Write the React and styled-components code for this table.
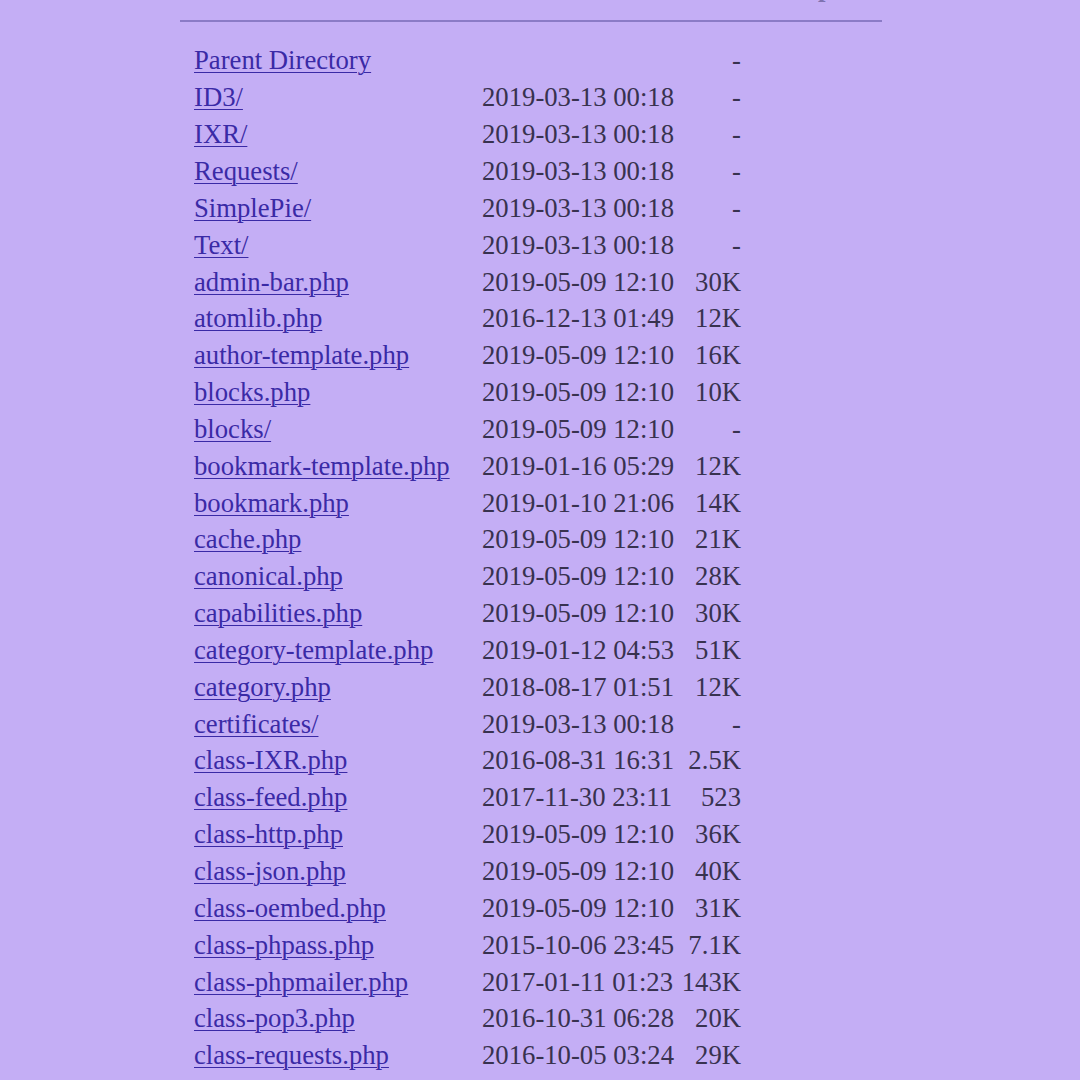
import styled, { createGlobalStyle } from 'styled-components';

const GlobalStyle = createGlobalStyle`
  html, body { margin:0; padding:0; background:#c4aef5; }
  body { font-family:"Liberation Serif", "Times New Roman", serif; color:#3a3454; }
  #root { min-height:1080px; overflow:hidden; }
`;

const Page = styled.div`
  height:1080px;
  overflow:hidden;
  padding-left:180px;
`;

const Listing = styled.div`
  width:702px;
  margin-top:-31px;
  font-size:26.7px;
  line-height:36.85px;
`;

const Row = styled.div`
  display:grid;
  grid-template-columns:14px 288px 192px 67px 141px;
  height:36.85px;
  white-space:nowrap;
`;

const HeaderCell = styled.div`
  text-align:center;
  font-weight:700;
  color:#7f72b0;
`;

const Rule = styled.div`
  box-sizing:border-box;
  padding:14px 0 0;
  height:36.6px;
  hr {
    margin:0;
    border:0;
    border-top:2px solid #8b7bc6;
  }
`;

const NameCell = styled.div`
  grid-column:2;
`;

const FileLink = styled.a`
  color:#3a2aa6;
  text-decoration:underline;
  text-underline-offset:3px;
  text-decoration-thickness:1px;
`;

const DateCell = styled.div`
  color:#38324f;
`;

const SizeCell = styled.div`
  text-align:right;
  color:#38324f;
`;

const files = [
  ['Parent Directory', '', '-'],
  ['ID3/', '2019-03-13 00:18', '-'],
  ['IXR/', '2019-03-13 00:18', '-'],
  ['Requests/', '2019-03-13 00:18', '-'],
  ['SimplePie/', '2019-03-13 00:18', '-'],
  ['Text/', '2019-03-13 00:18', '-'],
  ['admin-bar.php', '2019-05-09 12:10', '30K'],
  ['atomlib.php', '2016-12-13 01:49', '12K'],
  ['author-template.php', '2019-05-09 12:10', '16K'],
  ['blocks.php', '2019-05-09 12:10', '10K'],
  ['blocks/', '2019-05-09 12:10', '-'],
  ['bookmark-template.php', '2019-01-16 05:29', '12K'],
  ['bookmark.php', '2019-01-10 21:06', '14K'],
  ['cache.php', '2019-05-09 12:10', '21K'],
  ['canonical.php', '2019-05-09 12:10', '28K'],
  ['capabilities.php', '2019-05-09 12:10', '30K'],
  ['category-template.php', '2019-01-12 04:53', '51K'],
  ['category.php', '2018-08-17 01:51', '12K'],
  ['certificates/', '2019-03-13 00:18', '-'],
  ['class-IXR.php', '2016-08-31 16:31', '2.5K'],
  ['class-feed.php', '2017-11-30 23:11', '523'],
  ['class-http.php', '2019-05-09 12:10', '36K'],
  ['class-json.php', '2019-05-09 12:10', '40K'],
  ['class-oembed.php', '2019-05-09 12:10', '31K'],
  ['class-phpass.php', '2015-10-06 23:45', '7.1K'],
  ['class-phpmailer.php', '2017-01-11 01:23', '143K'],
  ['class-pop3.php', '2016-10-31 06:28', '20K'],
  ['class-requests.php', '2016-10-05 03:24', '29K'],
  ['class-smtp.php', '2017-01-11 01:23', '40K'],
];

export default function App(){
  return (
    <>
      <GlobalStyle />
      <Page>
        <Listing>
          <Row>
            <span />
            <HeaderCell>Name</HeaderCell>
            <HeaderCell>Last modified</HeaderCell>
            <HeaderCell>Size</HeaderCell>
            <HeaderCell>Description</HeaderCell>
          </Row>
          <Rule><hr /></Rule>
          {files.map(([name, date, size]) => (
            <Row key={name}>
              <NameCell><FileLink href="#">{name}</FileLink></NameCell>
              <DateCell>{date}</DateCell>
              <SizeCell>{size}</SizeCell>
              <span />
            </Row>
          ))}
        </Listing>
      </Page>
    </>
  );
}
